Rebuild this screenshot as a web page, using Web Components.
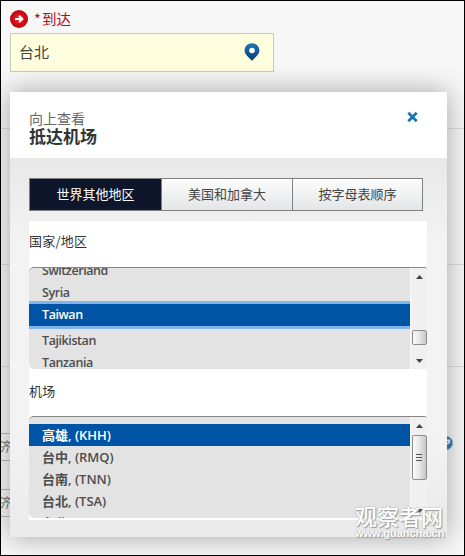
<!DOCTYPE html>
<html lang="zh-CN">
<head>
<meta charset="utf-8">
<title>抵达机场</title>
<style>
  html, body {
    margin: 0;
    height: 100%;
    overflow: hidden;
  }
  body {
    font-family: "Open Sans", "Noto Sans CJK SC", sans-serif;
    color: #444;
  }
</style>
</head>
<body>
<booking-page>
  <arrival-field label="到达" value="台北"></arrival-field>
  <airport-dialog slot="overlay">
    <span slot="hint">向上查看</span>
    <span slot="title">抵达机场</span>
    <region-tabs slot="tabs">
      <span class="tab">世界其他地区</span>
      <span class="tab">美国和加拿大</span>
      <span class="tab">按字母表顺序</span>
    </region-tabs>
    <option-list class="country" label="国家/地区">
      <list-item>Switzerland</list-item>
      <list-item>Syria</list-item>
      <list-item selected focused>Taiwan</list-item>
      <list-item>Tajikistan</list-item>
      <list-item>Tanzania</list-item>
    </option-list>
    <option-list class="airport" label="机场">
      <list-item selected>高雄, (KHH)</list-item>
      <list-item>台中, (RMQ)</list-item>
      <list-item>台南, (TNN)</list-item>
      <list-item>台北, (TSA)</list-item>
      <list-item>台北, (TPE)</list-item>
    </option-list>
  </airport-dialog>
  <site-mark slot="overlay"></site-mark>
</booking-page>

<script>
class BookingPage extends HTMLElement {
  constructor() {
    super();
    const template = `
  <style>
    :host {
      display: block;
      position: relative;
      box-sizing: border-box;
      width: 465px;
      height: 556px;
      border: 1px solid #000;
      overflow: hidden;
      background: #f7f7f7;
    }
    .rows {
      display: grid;
      grid-template-rows: 128px 136px 102px 188px;
      height: 554px;
    }
    .rows > div {
      box-sizing: border-box;
      border-bottom: 1px solid #dedede;
    }
    .rows > div:last-child {
      border: 0;
      padding-top: 66px;
    }
    .cabin {
      box-sizing: border-box;
      width: 60px;
      height: 28px;
      margin-bottom: 28px;
      border: 1px solid #bbb;
      border-left: 0;
      font: italic 14px/24px "Noto Sans CJK SC", sans-serif;
      text-indent: -5px;
      color: #777;
    }
    .help {
      position: absolute;
      left: 437px;
      top: 434px;
    }
  </style>
  <div class="rows">
    <div><slot></slot></div>
    <div></div>
    <div></div>
    <div>
      <div class="cabin">济</div>
      <div class="cabin">济</div>
    </div>
  </div>
  <svg class="help" width="16" height="16" viewBox="0 0 16 16">
    <circle cx="8" cy="8" r="6.7" fill="#3e78b8" stroke="#94b9df"/>
    <path d="M8 5.3h3.2v2.2L9 8.7" fill="none" stroke="#fff" stroke-width="1.7"/>
  </svg>
  <slot name="overlay"></slot>
`;
    this.attachShadow({mode: 'open'}).innerHTML = template;
  }
}
window.customElements.define('booking-page', BookingPage);

class ArrivalField extends HTMLElement {
  constructor() {
    super();
    const template = `
  <style>
    :host {
      display: block;
      padding: 8px 0 0 9px;
    }
    .label {
      display: flex;
      align-items: center;
      height: 20px;
      margin-bottom: 4px;
      font: 14.5px/20px "Noto Sans CJK SC", sans-serif;
      color: #b50d16;
    }
    .label svg {
      margin-right: 6px;
    }
    .label i {
      width: 8px;
      font-style: normal;
    }
    .input {
      display: flex;
      align-items: center;
      justify-content: space-between;
      box-sizing: border-box;
      width: 264px;
      height: 39px;
      padding: 0 13px 0 8px;
      border: 1px solid #cacab8;
      background: #ffffe0;
      font: 15px/37px "Noto Sans CJK SC", sans-serif;
    }
    #value {
      margin-top: -2px;
    }
    .input svg {
      margin-top: -2px;
    }
  </style>
  <div class="label">
    <svg width="18" height="18" viewBox="0 0 18 18">
      <defs>
        <radialGradient id="disc">
          <stop offset="0" stop-color="#e5323a"/>
          <stop offset=".7" stop-color="#d20a12"/>
          <stop offset="1" stop-color="#b50810"/>
        </radialGradient>
      </defs>
      <circle cx="9" cy="9" r="9" fill="url(#disc)"/>
      <path d="M5 9h7M9 5.8 12.3 9 9 12.2" fill="none" stroke="#fff" stroke-width="2"/>
    </svg>
    <i>*</i><span id="label"></span>
  </div>
  <div class="input">
    <span id="value"></span>
    <svg width="16" height="18" viewBox="0 0 16 18">
      <defs>
        <linearGradient id="pin" x1="0" y1="0" x2="0" y2="1">
          <stop offset="0" stop-color="#1d75b5"/>
          <stop offset="1" stop-color="#083f70"/>
        </linearGradient>
      </defs>
      <path d="M8 .3C3.700.3.6 3.500.6 7.500c0 4 4 6.700 7.400 10.200 3.400-3.500 7.400-6.200 7.400-10.200C15.400 3.500 12.300.3 8 .3z" fill="url(#pin)"/>
      <circle cx="8" cy="7.500" r="2.800" fill="#fff"/>
    </svg>
  </div>
`;
    this.attachShadow({mode: 'open'}).innerHTML = template;
  }

  connectedCallback() {
    this.shadowRoot.querySelector('#label').innerText = this.getAttribute('label');
    this.shadowRoot.querySelector('#value').innerText = this.getAttribute('value');
  }
}
window.customElements.define('arrival-field', ArrivalField);

class AirportDialog extends HTMLElement {
  constructor() {
    super();
    const template = `
  <style>
    :host {
      display: block;
      position: absolute;
      left: 9px;
      top: 91px;
      box-sizing: border-box;
      width: 437px;
      height: 445px;
      background: linear-gradient(#e8e8e8 66px, #f3f3f3 155px, #f3f3f3 330px, #eaeaea);
      box-shadow: 0 0 26px rgba(0, 0, 0, .34);
    }
    header {
      display: flex;
      justify-content: space-between;
      box-sizing: border-box;
      height: 66px;
      padding: 18px 29px 0 19px;
      background: #fff;
      font-family: "Noto Sans CJK SC", sans-serif;
    }
    .hint {
      font-size: 14px;
      line-height: 17px;
      color: #666;
    }
    .title {
      font-size: 17px;
      line-height: 17px;
      font-weight: bold;
      color: #333;
    }
    header svg {
      margin-top: 1px;
    }
    .tabs {
      padding: 20px 24px 10px 19px;
    }
    .panel {
      width: 398px;
      height: 299px;
      margin-left: 19px;
      background: #fff;
      overflow: hidden;
    }
  </style>
  <header>
    <div>
      <div class="hint"><slot name="hint"></slot></div>
      <div class="title"><slot name="title"></slot></div>
    </div>
    <svg width="11" height="12" viewBox="0 0 11 12">
      <path d="M1.300 1.800l8.400 8.400M9.700 1.800 1.300 10.200" stroke="#1877b7" stroke-width="2.800"/>
    </svg>
  </header>
  <div class="tabs"><slot name="tabs"></slot></div>
  <div class="panel"><slot></slot></div>
`;
    this.attachShadow({mode: 'open'}).innerHTML = template;
  }
}
window.customElements.define('airport-dialog', AirportDialog);

class RegionTabs extends HTMLElement {
  constructor() {
    super();
    const template = `
  <style>
    :host {
      display: grid;
      grid-template-columns: 132px 131px 1fr;
      box-sizing: border-box;
      height: 33px;
      border: 1px solid #808080;
      background: linear-gradient(#fdfdfd, #e3e5e6);
      font: 13px/30px "Noto Sans CJK SC", sans-serif;
      color: #444;
      text-align: center;
    }
    ::slotted(.tab) {
      border-right: 1px solid #808080;
    }
    ::slotted(.tab:first-child) {
      background: #0e162b;
      color: #fff;
    }
    ::slotted(.tab:last-child) {
      border-right: 0;
    }
  </style>
  <slot></slot>
`;
    this.attachShadow({mode: 'open'}).innerHTML = template;
  }
}
window.customElements.define('region-tabs', RegionTabs);

class OptionList extends HTMLElement {
  constructor() {
    super();
    const template = `
  <style>
    :host {
      display: block;
    }
    :host(.country) {
      font-size: 12.5px;
      letter-spacing: -.42px;
    }
    :host(.airport) {
      font-size: 13px;
    }
    .label {
      box-sizing: border-box;
      height: 46px;
      padding-top: 10px;
      font: 13px/20px "Noto Sans CJK SC", sans-serif;
      letter-spacing: .2px;
      color: #333;
    }
    :host(.airport) .label {
      height: 47px;
      padding-top: 12px;
    }
    .box {
      display: flex;
      box-sizing: border-box;
      height: 102px;
      border-top: 1px solid #858585;
      border-radius: 5px 3px 0 5px;
      background: #e3e3e3;
      overflow: hidden;
    }
    .items {
      flex: 1;
      margin-top: -8px;
      overflow: hidden;
    }
    :host(.airport) .items {
      margin-top: 7px;
    }
    .bar {
      display: flex;
      flex-direction: column;
      align-items: center;
      box-sizing: border-box;
      width: 17px;
      padding: 7px 1px 0;
      border-left: 1px solid #f8f8f8;
      background: #f0f0f0;
    }
    .bar svg {
      flex: none;
    }
    .thumb {
      display: flex;
      flex-direction: column;
      justify-content: center;
      align-items: center;
      gap: 2px;
      box-sizing: border-box;
      width: 15px;
      height: 15px;
      margin: 51px 0 14px;
      border: 1px solid #8d8d8d;
      border-radius: 2px;
      background: linear-gradient(90deg, #fafafa, #e9e9e9 45%, #c6c6c6);
    }
    .thumb i {
      display: none;
      width: 6px;
      height: 1px;
      background: #555;
    }
    :host(.airport) .thumb {
      height: 45px;
      margin: 7px 0 29px;
    }
    :host(.airport) .thumb i {
      display: block;
    }
  </style>
  <div class="label"></div>
  <div class="box">
    <div class="items"><slot></slot></div>
    <div class="bar">
      <svg width="7" height="4" viewBox="0 0 7 4"><path d="M3.500 0 7 4H0z" fill="#444"/></svg>
      <div class="thumb"><i></i><i></i><i></i></div>
      <svg width="7" height="4" viewBox="0 0 7 4"><path d="M0 0h7L3.500 4z" fill="#444"/></svg>
    </div>
  </div>
`;
    this.attachShadow({mode: 'open'}).innerHTML = template;
  }

  connectedCallback() {
    this.shadowRoot.querySelector('.label').innerText = this.getAttribute('label');
  }
}
window.customElements.define('option-list', OptionList);

class ListItem extends HTMLElement {
  constructor() {
    super();
    const template = `
  <style>
    :host {
      display: block;
      height: 22px;
      padding-left: 13px;
      font-family: "Open Sans", "Noto Sans CJK SC", sans-serif;
      font-weight: 600;
      line-height: 22px;
      color: #4d4d4d;
      white-space: nowrap;
    }
    :host([selected]) {
      background: #0054a6;
      color: #fff;
    }
    :host([focused]) {
      border: solid #7db4ea;
      border-width: 3px 0;
      margin-top: -3px;
      margin-bottom: 1px;
    }
  </style>
  <slot></slot>
`;
    this.attachShadow({mode: 'open'}).innerHTML = template;
  }
}
window.customElements.define('list-item', ListItem);

class SiteMark extends HTMLElement {
  constructor() {
    super();
    const template = `
  <style>
    :host {
      display: block;
      position: absolute;
      left: 354px;
      top: 502px;
      width: 92px;
      color: #fff;
      text-shadow: 1px 1px 1px #999, 0 0 2px #aaa;
      white-space: nowrap;
    }
    .name {
      font: 500 22px/24px "Noto Sans CJK SC", sans-serif;
    }
    .url {
      font: bold 11px/13px "Liberation Sans", sans-serif;
    }
  </style>
  <div class="name">观察者网</div>
  <div class="url">www.guancha.cn</div>
`;
    this.attachShadow({mode: 'open'}).innerHTML = template;
  }
}
window.customElements.define('site-mark', SiteMark);
</script>
</body>
</html>
